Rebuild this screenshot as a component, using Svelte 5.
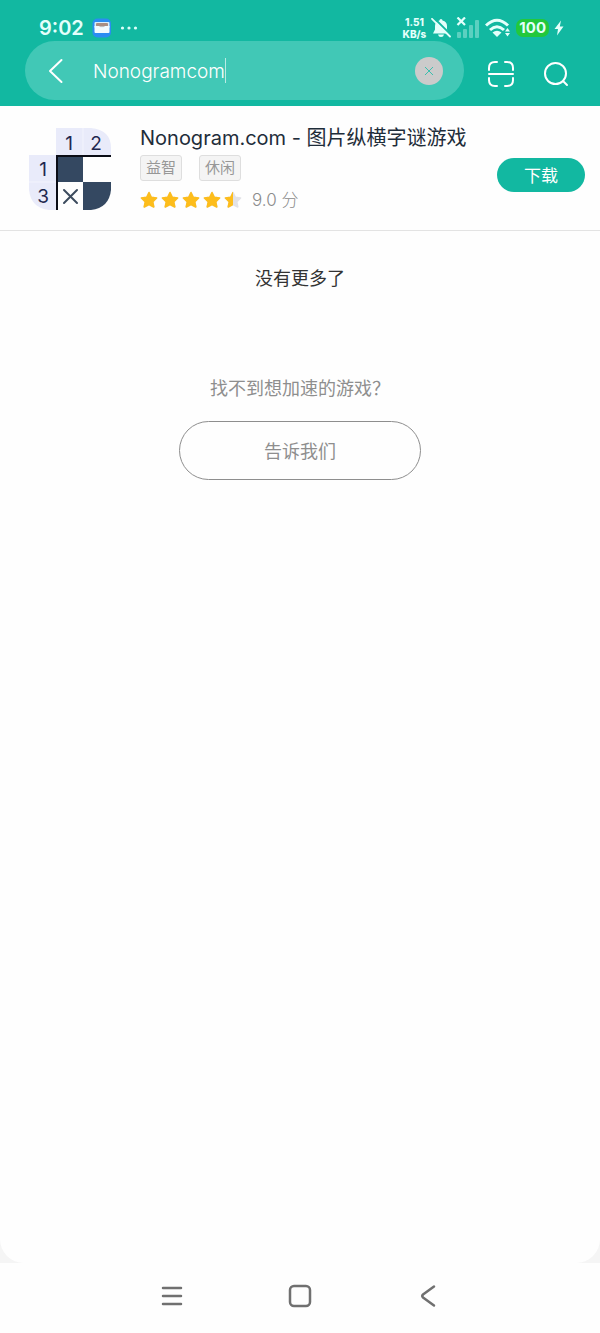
<script>
  // Search state
  let query = 'Nonogramcom';

  const games = [
    {
      name: 'Nonogram.com - 图片纵横字谜游戏',
      tags: ['益智', '休闲'],
      score: 9.0
    }
  ];

  const starPath = 'M9 1.5 L11.3 6.3 L16.6 7 L12.8 10.800 L13.800 16 L9 13.500 L4.200 16 L5.200 10.800 L1.400 7 L6.700 6.300 Z';

  // Each star stands for two points, returns how much of it is filled
  function starFill(score, index) {
    const fill = Math.max(0, Math.min(1, score / 2 - index));
    return fill * 18;
  }

  // Function to clear the search box
  function clearQuery() {
    query = '';
  }
</script>

<div class="app">
  <header class="header">
    <div class="status-bar">
      <div class="status-left">
        <span class="clock">9:02</span>
        <svg width="20" height="20" viewBox="0 0 20 20" aria-hidden="true">
          <rect x="0.500" y="0.500" width="18.500" height="19" rx="5" fill="#2a8df2" />
          <rect x="2.500" y="4" width="15" height="6" rx="1" fill="#d9eefb" />
          <rect x="4" y="5" width="12" height="3.500" rx="1" fill="#a98e84" />
          <path d="M2.500 8 H7 Q8 9.500 10 9.500 Q12 9.500 13 8 H17.500 V14 Q17.500 15 16.500 15 H3.500 Q2.500 15 2.500 14 Z" fill="#f2fbff" />
        </svg>
        <svg width="18" height="6" viewBox="0 0 18 6" fill="#dcfffa" aria-hidden="true">
          <circle cx="2.500" cy="3" r="1.600" />
          <circle cx="9" cy="3" r="1.600" />
          <circle cx="15.500" cy="3" r="1.600" />
        </svg>
      </div>
      <div class="status-right">
        <span class="speed">1.51<br />KB/s</span>
        <svg width="20" height="20" viewBox="0 0 20 20" aria-hidden="true">
          <path d="M10 1 Q11.500 1 11.500 2.500 Q16 3.500 16 8 V11.500 L18 15.500 H2 L4 11.500 V8 Q4 3.500 8.500 2.500 Q8.500 1 10 1 Z" fill="#e4fffb" />
          <path d="M7 16.500 H13 Q12.500 19 10 19 Q7.500 19 7 16.500 Z" fill="#e4fffb" />
          <path d="M3 0 L20 17" stroke="#12b8a1" stroke-width="2" />
          <path d="M1 0.800 L19 18.500" stroke="#e4fffb" stroke-width="1.800" stroke-linecap="round" />
        </svg>
        <svg width="24" height="22" viewBox="0 0 24 22" aria-hidden="true">
          <g fill="#e4fffb" opacity="0.350">
            <rect x="1" y="15" width="4" height="6" rx="1" />
            <rect x="7" y="12" width="4" height="9" rx="1" />
            <rect x="13" y="8" width="4" height="13" rx="1" />
            <rect x="19" y="3" width="4" height="18" rx="1" />
          </g>
          <path d="M1.500 0.500 L9 8 M9 0.500 L1.500 8" stroke="#e4fffb" stroke-width="2.200" />
        </svg>
        <svg width="26" height="20" viewBox="0 0 26 20" fill="none" stroke="#e4fffb" aria-hidden="true">
          <path d="M1 7.500 Q12 -3 23 7.500" stroke-width="3" />
          <path d="M5 12 Q12 5.500 19 12" stroke-width="3" />
          <path d="M7.500 14.500 Q12 11 16.500 14.500 L12 19 Z" fill="#e4fffb" stroke="none" />
          <path d="M22.500 10 L25 13.500 H20 Z M20 15 H25 L22.500 18.500 Z" fill="#e4fffb" stroke="none" />
        </svg>
        <span class="battery">100</span>
        <svg width="10" height="16" viewBox="0 0 10 16" fill="#e4fffb" aria-hidden="true">
          <path d="M7 0.500 L0.500 9 H4 L3 15.500 L9.500 6.500 H5.800 Z" />
        </svg>
      </div>
    </div>

    <div class="toolbar">
      <form class="search-box" on:submit|preventDefault>
        <button type="button" class="icon-button" aria-label="返回">
          <svg width="16" height="26" viewBox="0 0 16 26" fill="none" stroke="#fff" stroke-width="2" stroke-linecap="round" stroke-linejoin="round">
            <path d="M13.500 2 L2 13 L13.500 24" />
          </svg>
        </button>
        <div class="search-field">
          <input type="text" class="search-input" aria-label="搜索游戏" bind:value={query} />
          <span class="caret"></span>
        </div>
        <button type="button" class="clear-button" aria-label="清除" on:click={clearQuery}>
          <svg width="10" height="10" viewBox="0 0 10 10" fill="none" stroke="#3cbfae">
            <path d="M1 1 L9 9 M9 1 L1 9" />
          </svg>
        </button>
      </form>
      <div class="toolbar-actions">
        <button type="button" class="icon-button" aria-label="扫一扫">
          <svg width="28" height="28" viewBox="0 0 28 28" fill="none" stroke="#fff" stroke-width="2" stroke-linecap="round">
            <path d="M2 10 V8 Q2 2 8 2 H10 M18 2 H20 Q26 2 26 8 V10 M2 18 V20 Q2 26 8 26 H10 M18 26 H20 Q26 26 26 20 V18" />
            <path d="M2 14 H26" />
          </svg>
        </button>
        <button type="button" class="icon-button" aria-label="搜索">
          <svg width="26" height="26" viewBox="0 0 26 26" fill="none" stroke="#fff" stroke-width="2" stroke-linecap="round">
            <circle cx="12.500" cy="12.500" r="10.500" />
            <path d="M20 20 L24 24" />
          </svg>
        </button>
      </div>
    </div>
  </header>

  <div class="page">
    <main class="content">
      {#each games as game}
        <article class="game">
          <svg width="82" height="82" viewBox="0 0 82 82" aria-hidden="true">
            <path d="M27 0 H62 Q82 2 82 20 V27 H27 Z M0 27 H27 V82 H20 Q2 80 0 62 Z" fill="#e9ebfa" />
            <path d="M54 0 V27 M0 54 H27" stroke="#f3f4fd" />
            <rect x="28" y="28" width="26" height="26" fill="#344861" />
            <path d="M54 54 H82 V62 Q80 80 62 82 H54 Z" fill="#344861" />
            <path d="M28 82 V28 H82" fill="none" stroke="#0b0d16" stroke-width="2" />
            <path d="M35 62 L48 75 M48 62 L35 75" stroke="#3c4b5e" stroke-width="2" stroke-linecap="round" />
            <g class="icon-number">
              <text x="40" y="22">1</text>
              <text x="67" y="22">2</text>
              <text x="14" y="48">1</text>
              <text x="14" y="75">3</text>
            </g>
          </svg>
          <div class="game-info">
            <h2 class="game-name">{game.name}</h2>
            <div class="tags">
              {#each game.tags as tag}
                <span class="tag">{tag}</span>
              {/each}
            </div>
            <div class="rating">
              <div class="stars">
                {#each [0, 1, 2, 3, 4] as i}
                  <svg width="18" height="18" viewBox="0 0 18 18" stroke-width="1.500" stroke-linejoin="round" aria-hidden="true">
                    <clipPath id="star-{i}">
                      <rect width={starFill(game.score, i)} height="18" />
                    </clipPath>
                    <path d={starPath} fill="#e2e2e6" stroke="#e2e2e6" />
                    <path d={starPath} fill="#fdbd1c" stroke="#fdbd1c" clip-path="url(#star-{i})" />
                  </svg>
                {/each}
              </div>
              <span class="score">{game.score.toFixed(1)} 分</span>
            </div>
          </div>
          <button type="button" class="download-button">下载</button>
        </article>
      {/each}

      <p class="no-more">没有更多了</p>

      <section class="feedback">
        <p class="feedback-text">找不到想加速的游戏？</p>
        <button type="button" class="feedback-button">告诉我们</button>
      </section>
    </main>
  </div>

  <!-- System navigation -->
  <nav class="nav-bar">
    <button type="button" class="icon-button" aria-label="菜单">
      <svg width="24" height="24" viewBox="0 0 24 24" fill="none" stroke="#707070" stroke-width="2.500" stroke-linecap="round">
        <path d="M3 4 H21 M3 12 H21 M3 20 H21" />
      </svg>
    </button>
    <button type="button" class="icon-button" aria-label="主页">
      <svg width="24" height="24" viewBox="0 0 24 24" fill="none" stroke="#707070" stroke-width="2.500">
        <rect x="2" y="2" width="20" height="20" rx="4" />
      </svg>
    </button>
    <button type="button" class="icon-button" aria-label="后退">
      <svg width="24" height="24" viewBox="0 0 24 24" fill="none" stroke="#707070" stroke-width="2.500" stroke-linecap="round" stroke-linejoin="round">
        <path d="M18 2.500 L7 10.500 Q5.500 12 7 13.500 L18 21.500" />
      </svg>
    </button>
  </nav>
</div>

<style>
  :global(body) {
    background: #fefefe;
  }

  .app {
    display: flex;
    flex-direction: column;
    min-height: 100vh;
    font-family: Inter, "Noto Sans CJK SC", sans-serif;
    font-weight: 400;
  }

  button {
    font-family: inherit;
    font-weight: inherit;
    cursor: pointer;
  }

  svg {
    display: block;
    flex-shrink: 0;
  }

  .header {
    box-sizing: border-box;
    height: 106px;
    padding-top: 15px;
    background: #12b8a1;
    color: #e4fffb;
  }

  .status-bar {
    display: flex;
    align-items: center;
    justify-content: space-between;
    height: 26px;
    padding: 0 36px 0 39px;
  }

  .status-left,
  .status-right {
    display: flex;
    align-items: center;
  }

  .status-left {
    gap: 8px;
  }

  .status-right {
    gap: 5px;
  }

  .clock {
    font-size: 20px;
    font-weight: 600;
  }

  .speed {
    font-size: 10px;
    line-height: 12px;
    font-weight: 800;
    text-align: center;
  }

  .battery {
    padding: 0 3px;
    border-radius: 7px;
    background: #22c83c;
    font-size: 15px;
    line-height: 18px;
    font-weight: 700;
  }

  .toolbar {
    display: flex;
    align-items: center;
    gap: 23px;
    padding: 0 31px 0 25px;
  }

  .toolbar-actions {
    display: flex;
    align-items: center;
    gap: 28px;
    padding-top: 6px;
  }

  .icon-button {
    display: flex;
    padding: 0;
    border: none;
    background: none;
  }

  .search-box {
    display: flex;
    flex: 1;
    align-items: center;
    min-width: 0;
    height: 59px;
    box-sizing: border-box;
    padding: 0 21px 0 23px;
    border-radius: 30px;
    background: #41c8b6;
  }

  .search-field {
    display: flex;
    flex: 1;
    align-items: center;
    min-width: 0;
    margin-left: 29px;
  }

  .search-input {
    field-sizing: content;
    min-width: 0;
    max-width: 100%;
    padding: 2px 0 0;
    border: none;
    outline: none;
    background: transparent;
    color: #fff;
    caret-color: transparent;
    font-family: inherit;
    font-size: 19px;
    font-weight: 300;
  }

  .caret {
    width: 1px;
    height: 25px;
    background: #b9ebe4;
  }

  .clear-button {
    display: flex;
    align-items: center;
    justify-content: center;
    width: 28px;
    height: 28px;
    padding: 0;
    border: none;
    border-radius: 50%;
    background: #cbcbcb;
  }

  .page {
    display: flex;
    flex: 1;
    background: #f5f5f5;
  }

  .content {
    flex: 1;
    min-width: 0;
    border-radius: 0 0 24px 24px;
    background: #fefefe;
  }

  .game {
    display: flex;
    align-items: center;
    padding: 20px 15px 19px 29px;
    border-bottom: 1px solid #e3e3e3;
  }

  .icon-number {
    fill: #1f2850;
    font-size: 19px;
    text-anchor: middle;
  }

  .game-info {
    flex: 1;
    min-width: 0;
    margin-left: 29px;
  }

  .game-name {
    margin: 0;
    overflow: hidden;
    color: #1f2d3a;
    font-size: 20px;
    line-height: 24px;
    font-weight: 400;
    white-space: nowrap;
  }

  .tags {
    display: flex;
    gap: 17px;
    margin-top: 5px;
  }

  .tag {
    padding: 0 5px;
    border: 1px solid #dedede;
    border-radius: 3px;
    background: #f4f4f4;
    color: #979797;
    font-size: 15px;
    line-height: 24px;
  }

  .rating {
    display: flex;
    align-items: center;
    gap: 10px;
    margin-top: 8px;
  }

  .stars {
    display: flex;
    gap: 3px;
  }

  .score {
    color: #8b8b8b;
    font-size: 17px;
    line-height: 22px;
    font-weight: 300;
  }

  .download-button {
    width: 88px;
    height: 34px;
    margin-top: 12px;
    padding: 0;
    border: none;
    border-radius: 17px;
    background: #12b8a1;
    color: #fff;
    font-size: 17px;
  }

  .no-more {
    margin: 36px 0 0;
    color: #333;
    font-size: 18px;
    line-height: 24px;
    text-align: center;
  }

  .feedback {
    display: flex;
    flex-direction: column;
    align-items: center;
    gap: 20px;
    margin-top: 86px;
    color: #8e8e8e;
  }

  .feedback-text {
    margin: 0;
    font-size: 18px;
    line-height: 24px;
  }

  .feedback-button {
    width: 242px;
    height: 59px;
    padding: 0 0 2px;
    border: 1px solid #8e8e8e;
    border-radius: 30px;
    background: transparent;
    color: #8e8e8e;
    font-size: 18px;
  }

  .nav-bar {
    display: flex;
    align-items: center;
    justify-content: center;
    gap: 104px;
    height: 66px;
    padding-bottom: 4px;
  }
</style>
